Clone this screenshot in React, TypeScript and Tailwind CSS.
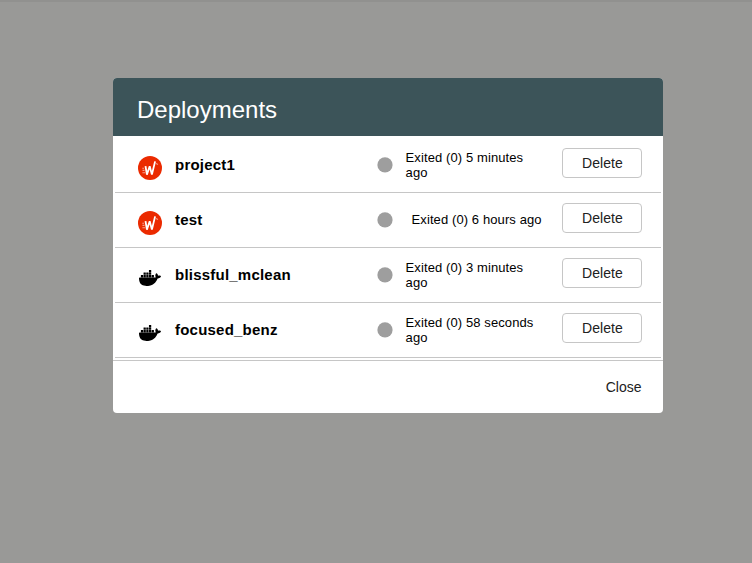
import React from "react";
import { SiDocker } from "react-icons/si";

type Deployment = { name: string; status: string; kind: "project" | "docker" };

const deployments: Deployment[] = [
  { name: "project1", status: "Exited (0) 5 minutes ago", kind: "project" },
  { name: "test", status: "Exited (0) 6 hours ago", kind: "project" },
  { name: "blissful_mclean", status: "Exited (0) 3 minutes ago", kind: "docker" },
  { name: "focused_benz", status: "Exited (0) 58 seconds ago", kind: "docker" },
];

function ProjectIcon() {
  return (
    <svg viewBox="0 0 24 24" className="size-6">
      <circle cx="12" cy="12" r="12" fill="#eb2a00" />
      <path d="M7.5 10.2 L8.9 18.6 L11.7 10.2 L13.9 18.6 L17.1 5.4" fill="none" stroke="#fff" strokeWidth="1.8" strokeLinejoin="bevel" />
      <path d="M18 7.6 L20 8.4 M4.3 12.2h1.8 M4.5 14.4h2 M4.4 16.7h2.6" fill="none" stroke="#fff" strokeWidth="1.1" opacity="0.55" />
    </svg>
  );
}

function DeploymentRow({ name, status, kind }: Deployment) {
  return (
    <li className="flex h-[55px] border-b border-[#c6c6c6] pl-[22px]">
      <div className="flex w-[38px] shrink-0 items-start pt-[18px]">
        {kind === "project" ? <span className="ml-px"><ProjectIcon /></span> : <SiDocker className="mt-px ml-[2px] size-[22px] text-black" />}
      </div>
      <div className="w-[202px] shrink-0 pt-[15px] text-[15px] leading-6 font-bold tracking-[0.22px] text-black">{name}</div>
      <div className="flex w-[156px] shrink-0 items-center pb-[0.5px]">
        <svg viewBox="0 0 16 16" className="mt-[0.5px] size-4 shrink-0">
          <circle cx="8" cy="7.9" r="7.6" fill="#9e9e9e" />
        </svg>
        <div className="ml-[12.6px] flex w-[142px] shrink-0 justify-center text-[13px] leading-[15px] tracking-[0.1px] text-black">
          <span>{status}</span>
        </div>
      </div>
      <button className="mt-[10px] ml-[29px] h-[30px] w-20 shrink-0 rounded border border-[#c6c6c6] bg-white pb-px pl-px text-sm tracking-[0.05px] text-[#212121]">Delete</button>
    </li>
  );
}

export default function App() {
  return (
    <div className="h-[563px] w-[752px] border-t-2 border-[#91918f] bg-[#999997] pt-[76px] font-['Liberation_Sans',Arial,sans-serif]">
      <section className="ml-[113px] w-[550px] overflow-hidden rounded bg-white">
        <header className="h-[58px] bg-[#3c5459] pt-4 pl-6 text-2xl leading-8 text-white">Deployments</header>
        <ul className="p-[2px]">
          {deployments.map((d) => <DeploymentRow key={d.name} {...d} />)}
        </ul>
        <footer className="flex h-[53px] items-center justify-end border-t border-[#c6c6c6] pr-[21.5px]">
          <button className="text-sm text-[#212121]">Close</button>
        </footer>
      </section>
    </div>
  );
}
